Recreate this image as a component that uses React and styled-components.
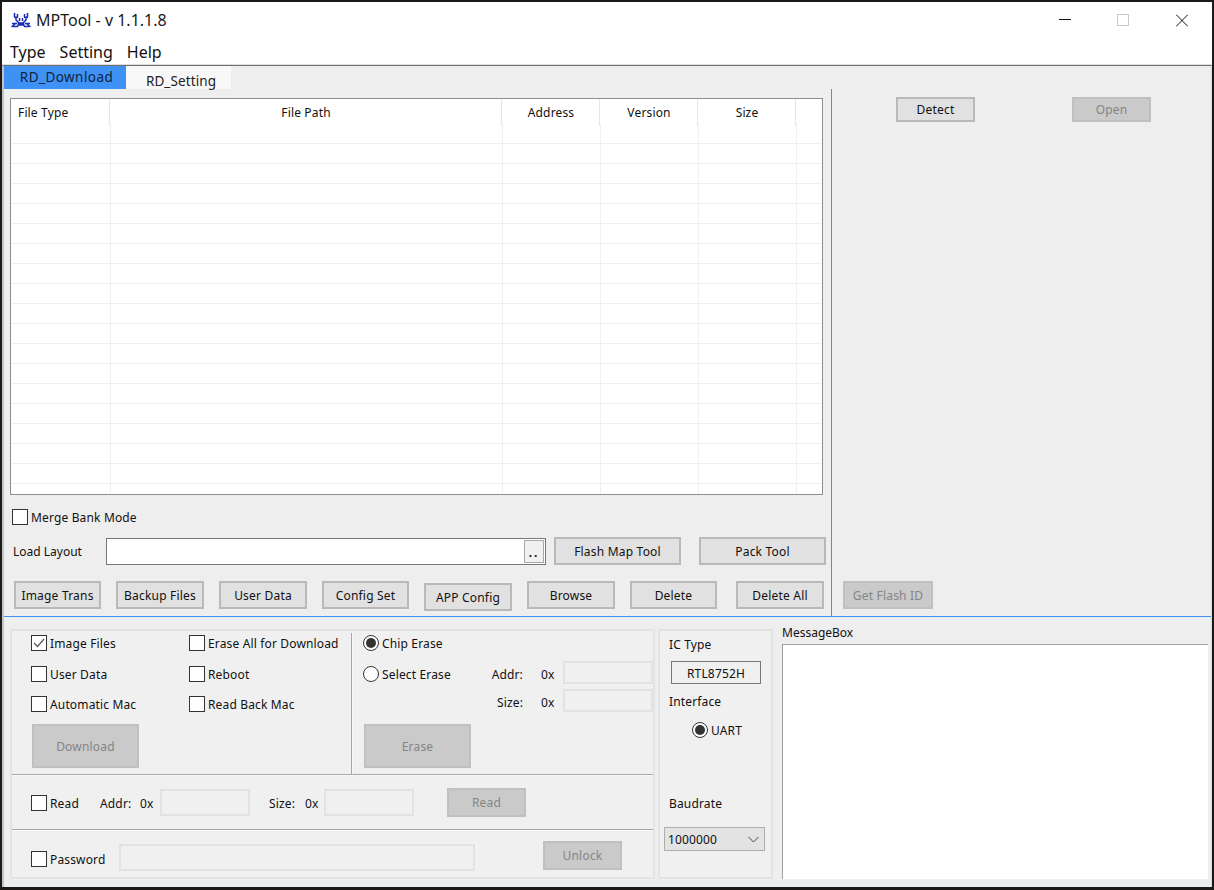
import React from "react";
import styled, { createGlobalStyle } from "styled-components";

const GlobalStyle = createGlobalStyle`
  html, body {
    margin: 0;
    padding: 0;
    background: #1c1a18;
    overflow: hidden;
  }
  * {
    box-sizing: border-box;
  }
`;

const FONT = `"Noto Sans", "Liberation Sans", sans-serif`;

const Window = styled.div`
  width: 1210px;
  height: 885px;
  margin: 2px 0 0 2px;
  background: #eeeeee;
  font-family: ${FONT};
  font-size: 12px;
  line-height: 14px;
  letter-spacing: 0.15px;
  color: #111;
  display: flex;
  flex-direction: column;
  overflow: hidden;
`;

const TitleBar = styled.div`
  height: 35px;
  background: #fff;
  display: flex;
  align-items: center;
  padding: 1px 0 0 9px;
`;

const AppName = styled.span`
  margin-left: 5px;
  font-size: 16px;
  letter-spacing: 0;
  color: #1a1a1a;
  white-space: nowrap;
`;

const WindowControls = styled.div`
  margin-left: auto;
  display: flex;
  align-items: center;
  padding-right: 24px;
  gap: 46px;

  svg {
    display: block;
  }
  svg:last-child {
    margin-left: 1px;
  }
`;

const MenuBar = styled.div`
  height: 28px;
  background: #fff;
  border-bottom: 1px solid #dedede;
  display: flex;
  gap: 14px;
  padding: 3px 0 0 8px;
  font-size: 16px;
  line-height: 24px;
  letter-spacing: 0;
`;

const Body = styled.div`
  flex: 1;
  display: flex;
  flex-direction: column;
  min-height: 0;
  border-top: 1px solid #6e6e6e;
  border-left: 2px solid #c4c4c4;
  border-right: 1px solid #dcdcdc;
`;

const TabStrip = styled.div`
  height: 23px;
  display: flex;
`;

const Tab = styled.div`
  width: ${(p) => p.$w}px;
  background: ${(p) => (p.$active ? "#3f92f5" : "#f8f8f8")};
  color: ${(p) => (p.$active ? "#10243c" : "#222")};
  font-size: 13.5px;
  line-height: 20px;
  text-align: center;
  letter-spacing: ${(p) => (p.$active ? 0.45 : 0.1)}px;
  padding: ${(p) => (p.$active ? "1px 0 0 3px" : "5px 0 0 5px")};
  white-space: nowrap;
`;

const Upper = styled.div`
  height: 528px;
  display: flex;
  border-bottom: 1px solid #3f92f5;
`;

const LeftPanel = styled.div`
  width: 828px;
  padding: 9px 0 0 6px;
  border-right: 1px solid #3f92f5;
`;

const RightPanel = styled.div`
  flex: 1;
  display: flex;
  flex-direction: column;
  justify-content: space-between;
  padding: 8px 0 7px 11px;
`;

const DetectRow = styled.div`
  display: flex;
`;

const TableFrame = styled.div`
  width: 813px;
  height: 397px;
  background: #fff;
  border: 1px solid #8a8f96;
  overflow: hidden;
`;

const HeaderRow = styled.div`
  display: grid;
  grid-template-columns: 99px 392px 98px 98px 98px 1fr;
  height: 25px;
`;

const HeaderCell = styled.div`
  border-right: ${(p) => (p.$last ? "none" : "1px solid #e6e6e6")};
  text-align: ${(p) => (p.$left ? "left" : "center")};
  padding-left: ${(p) => (p.$left ? 7 : 1)}px;
  line-height: 27px;
`;

const TableRow = styled.div`
  display: grid;
  grid-template-columns: 100px 392px 98px 98px 98px 1fr;
  height: 20px;
  border-bottom: 1px solid #f0f0f0;
`;

const TableCell = styled.div`
  border-right: ${(p) => (p.$last ? "none" : "1px solid #f0f0f0")};
`;

const MergeRow = styled.div`
  margin: 14px 0 0 2px;
`;

const LoadRow = styled.div`
  display: flex;
  align-items: center;
  height: 28px;
  margin-top: 12px;
`;

const LoadLabel = styled.span`
  width: 93px;
  margin-left: 3px;
  padding-top: 2px;
  letter-spacing: 0;
`;

const PathInput = styled.div`
  width: 440px;
  height: 27px;
  margin: 1px 8px 0 0;
  background: #fff;
  border: 1px solid #777;
  display: flex;
  justify-content: flex-end;
  align-items: center;
  padding-right: 1px;
`;

const BrowseDots = styled.div`
  width: 20px;
  height: 23px;
  background: #f0f0f0;
  border: 1px solid #a8a8a8;
  text-align: center;
  line-height: 24px;
  font-weight: 700;
  letter-spacing: 2px;
`;

const ActionRow = styled.div`
  display: flex;
  align-items: flex-start;
  gap: 15px;
  height: 30px;
  margin: 16px 0 0 4px;
`;

const Button = styled.div`
  flex: none;
  width: ${(p) => p.$w}px;
  height: ${(p) => p.$h || 28}px;
  margin-top: ${(p) => p.$top || 0}px;
  margin-left: ${(p) => p.$left || 0}px;
  padding-top: ${(p) => p.$pad ?? 2}px;
  background: ${(p) => (p.$disabled ? "#cacaca" : "#e1e1e1")};
  border: 2px solid ${(p) => (p.$disabled ? "#c0c0c0" : "#b9b9b9")};
  color: ${(p) => (p.$disabled ? "#858585" : "#111")};
  letter-spacing: 0.2px;
  display: flex;
  align-items: center;
  justify-content: center;
  white-space: nowrap;
`;

const Lower = styled.div`
  flex: 1;
  display: flex;
  padding: 12px 0 0 6px;
`;

const GroupBox = styled.div`
  flex: none;
  width: ${(p) => p.$w}px;
  height: 250px;
  margin-right: ${(p) => p.$gap}px;
  border: 2px solid #e3e3e3;
  background: #f0f0f0;
  display: flex;
  flex-direction: column;
`;

const OptionsRow = styled.div`
  display: flex;
  height: 143px;
`;

const DownloadColumn = styled.div`
  width: 339px;
  padding: 4px 0 0 19px;
`;

const CheckGrid = styled.div`
  display: grid;
  grid-template-columns: 158px 1fr;
  grid-template-rows: 31px 30px 28px;
`;

const VerticalRule = styled.div`
  width: 2px;
  height: 141px;
  margin-top: 2px;
  background: #a8a8a8;
  border-right: 1px solid #f8f8f8;
`;

const EraseColumn = styled.div`
  flex: 1;
  padding: 4px 0 0 10px;
`;

const Field = styled.label`
  display: flex;
  align-items: center;
  gap: 3px;
  flex: none;
  width: ${(p) => (p.$w ? `${p.$w}px` : "auto")};
  height: 16px;
  margin-top: ${(p) => p.$top || 0}px;
  white-space: nowrap;
`;

const FieldText = styled.span`
  padding-top: 2px;
`;

const CheckSquare = styled.span`
  flex: none;
  width: 16px;
  height: 16px;
  background: #fff;
  border: 1px solid #333;
  display: flex;
  align-items: center;
  justify-content: center;
`;

const RadioCircle = styled.span`
  flex: none;
  width: 16px;
  height: 16px;
  border-radius: 50%;
  background: #fff;
  border: 1px solid #333;
  display: flex;
  align-items: center;
  justify-content: center;

  &::after {
    content: "";
    display: ${(p) => (p.$on ? "block" : "none")};
    width: 10px;
    height: 10px;
    border-radius: 50%;
    background: #333;
  }
`;

const ChipRow = styled.div`
  height: 26px;
`;

const EraseLine = styled.div`
  display: flex;
  align-items: center;
  height: 23px;
  margin-top: ${(p) => p.$top || 0}px;
`;

const FieldLabel = styled.span`
  flex: none;
  width: ${(p) => p.$w}px;
  margin-left: ${(p) => p.$left || 0}px;
  padding-top: ${(p) => p.$pad || 2}px;
  text-align: ${(p) => p.$align || "left"};
  white-space: nowrap;
`;

const HexInput = styled.div`
  flex: none;
  width: ${(p) => p.$w}px;
  height: ${(p) => p.$h || 27}px;
  margin-left: ${(p) => p.$left || 0}px;
  background: #f0f0f0;
  border: 2px solid #e2e2e2;
`;

const HorizontalRule = styled.div`
  height: 2px;
  background: #f8f8f8;
  border-top: 1px solid #a8a8a8;
`;

const ReadRow = styled.div`
  display: flex;
  align-items: center;
  height: 53px;
  padding-left: 19px;
`;

const PasswordRow = styled.div`
  display: flex;
  align-items: center;
  flex: 1;
  padding: 7px 0 0 19px;
`;

const InterfaceBox = styled(GroupBox)`
  padding-left: 4px;
`;

const SideLabel = styled.div`
  margin: ${(p) => p.$top}px 0 0 5px;
`;

const ChipName = styled.div`
  width: 90px;
  height: 23px;
  margin: 9px 0 0 7px;
  padding-top: 2px;
  border: 1px solid #777;
  display: flex;
  align-items: center;
  justify-content: center;
`;

const UartRow = styled.div`
  margin: 13px 0 0 28px;
`;

const BaudSelect = styled.div`
  width: 101px;
  height: 24px;
  margin-top: 16px;
  background: #e3e3e3;
  border: 1px solid #adadad;
  display: flex;
  align-items: center;
  justify-content: space-between;
  padding: 0 5px 0 3px;
`;

const BaudValue = styled.span`
  padding-top: 2px;
`;

const MessagePane = styled.div`
  width: 426px;
  display: flex;
  flex-direction: column;
`;

const MessageLabel = styled.div`
  height: 18px;
  margin-top: -3px;
  letter-spacing: 0;
`;

const MessageArea = styled.div`
  height: 235px;
  background: #fff;
  border-top: 1px solid #a0a0a0;
  border-left: 1px solid #a0a0a0;
`;

const Check = ({ on }) => (
  <CheckSquare>
    {on && (
      <svg width="12" height="10" viewBox="0 0 12 10" fill="none">
        <path d="M1 5l3.5 3.5L11 1" stroke="#555" strokeWidth="1.2" />
      </svg>
    )}
  </CheckSquare>
);

const CheckField = ({ label, on, w, top }) => (
  <Field $w={w} $top={top}>
    <Check on={on} />
    <FieldText>{label}</FieldText>
  </Field>
);

const RadioField = ({ label, on, w, top }) => (
  <Field $w={w} $top={top}>
    <RadioCircle $on={on} />
    <FieldText>{label}</FieldText>
  </Field>
);

const CrabLogo = () => (
  <svg width="20" height="15" viewBox="0 0 20 15" fill="none" stroke="#1b2db8" strokeWidth="1.5">
    <path d="M3.5 0v4M6.5 1v3M3 4.2h4M5 4v3l3 3" />
    <path d="M16.5 0v4M13.5 1v3M13 4.2h4M15 4v3l-3 3" />
    <path d="M8.5 5v3M11.5 5v3" />
    <path d="M7.5 10h5v2h-5z" fill="#1b2db8" />
    <path d="M1 10.5h5M.5 14l4-3.5M2 13.5h4.5l1-2" />
    <path d="M19 10.5h-5M19.5 14l-4-3.5M18 13.5h-4.5l-1-2" />
  </svg>
);

const WindowButtons = () => (
  <WindowControls>
    <svg width="12" height="13" viewBox="0 0 12 13">
      <path d="M0 5.5h12" stroke="#111" strokeWidth="1" />
    </svg>
    <svg width="12" height="13" viewBox="0 0 12 13" fill="none">
      <rect x=".5" y=".5" width="11" height="11" stroke="#c8c8c8" />
    </svg>
    <svg width="12" height="13" viewBox="0 0 12 13">
      <path d="M0 .5l12 12M12 .5l-12 12" stroke="#111" strokeWidth="1" />
    </svg>
  </WindowControls>
);

const headers = ["File Type", "File Path", "Address", "Version", "Size", ""];
const rows = Array.from({ length: 19 }, (_, i) => i);

const FileTable = () => (
  <TableFrame>
    <HeaderRow>
      {headers.map((h, i) => (
        <HeaderCell key={i} $left={i === 0} $last={i === 5}>
          {h}
        </HeaderCell>
      ))}
    </HeaderRow>
    {rows.map((r) => (
      <TableRow key={r}>
        {headers.map((_, i) => (
          <TableCell key={i} $last={i === 5} />
        ))}
      </TableRow>
    ))}
  </TableFrame>
);

export default function App() {
  return (
    <>
      <GlobalStyle />
      <Window>
        <TitleBar>
          <CrabLogo />
          <AppName>MPTool - v 1.1.1.8</AppName>
          <WindowButtons />
        </TitleBar>
        <MenuBar>
          <span>Type</span>
          <span>Setting</span>
          <span>Help</span>
        </MenuBar>
        <Body>
          <TabStrip>
            <Tab $w={122} $active>
              RD_Download
            </Tab>
            <Tab $w={105}>RD_Setting</Tab>
          </TabStrip>
          <Upper>
            <LeftPanel>
              <FileTable />
              <MergeRow>
                <CheckField label="Merge Bank Mode" />
              </MergeRow>
              <LoadRow>
                <LoadLabel>Load Layout</LoadLabel>
                <PathInput>
                  <BrowseDots>..</BrowseDots>
                </PathInput>
                <Button $w={127}>Flash Map Tool</Button>
                <Button $w={127} $left={18}>
                  Pack Tool
                </Button>
              </LoadRow>
              <ActionRow>
                <Button $w={87}>Image Trans</Button>
                <Button $w={88}>Backup Files</Button>
                <Button $w={88}>User Data</Button>
                <Button $w={87}>Config Set</Button>
                <Button $w={88} $top={2}>
                  APP Config
                </Button>
                <Button $w={88}>Browse</Button>
                <Button $w={87}>Delete</Button>
                <Button $w={88} $left={4}>
                  Delete All
                </Button>
              </ActionRow>
            </LeftPanel>
            <RightPanel>
              <DetectRow>
                <Button $w={79} $h={25} $left={53} $pad={0}>
                  Detect
                </Button>
                <Button $w={79} $h={25} $left={97} $pad={0} $disabled>
                  Open
                </Button>
              </DetectRow>
              <Button $w={90} $disabled>
                Get Flash ID
              </Button>
            </RightPanel>
          </Upper>
          <Lower>
            <GroupBox $w={645} $gap={3}>
              <OptionsRow>
                <DownloadColumn>
                  <CheckGrid>
                    <CheckField label="Image Files" on />
                    <CheckField label="Erase All for Download" />
                    <CheckField label="User Data" />
                    <CheckField label="Reboot" />
                    <CheckField label="Automatic Mac" />
                    <CheckField label="Read Back Mac" />
                  </CheckGrid>
                  <Button $w={107} $h={44} $left={1} $disabled>
                    Download
                  </Button>
                </DownloadColumn>
                <VerticalRule />
                <EraseColumn>
                  <ChipRow>
                    <RadioField label="Chip Erase" on />
                  </ChipRow>
                  <EraseLine>
                    <RadioField label="Select Erase" w={128} top={3} />
                    <FieldLabel $w={32} $align="right" $pad={5}>
                      Addr:
                    </FieldLabel>
                    <FieldLabel $w={22} $left={18} $pad={5}>
                      0x
                    </FieldLabel>
                    <HexInput $w={90} $h={23} />
                  </EraseLine>
                  <EraseLine $top={5}>
                    <FieldLabel $w={32} $left={128} $align="right" $pad={4}>
                      Size:
                    </FieldLabel>
                    <FieldLabel $w={22} $left={18} $pad={4}>
                      0x
                    </FieldLabel>
                    <HexInput $w={90} $h={23} />
                  </EraseLine>
                  <Button $w={107} $h={44} $left={1} $top={12} $disabled>
                    Erase
                  </Button>
                </EraseColumn>
              </OptionsRow>
              <HorizontalRule />
              <ReadRow>
                <CheckField label="Read" w={69} />
                <FieldLabel $w={40}>Addr:</FieldLabel>
                <FieldLabel $w={20}>0x</FieldLabel>
                <HexInput $w={90} />
                <FieldLabel $w={36} $left={19}>
                  Size:
                </FieldLabel>
                <FieldLabel $w={19}>0x</FieldLabel>
                <HexInput $w={90} />
                <Button $w={79} $h={29} $left={33} $pad={0} $disabled>
                  Read
                </Button>
              </ReadRow>
              <HorizontalRule />
              <PasswordRow>
                <CheckField label="Password" w={88} top={3} />
                <HexInput $w={356} />
                <Button $w={79} $h={29} $left={68} $top={-4} $pad={0} $disabled>
                  Unlock
                </Button>
              </PasswordRow>
            </GroupBox>
            <InterfaceBox $w={115} $gap={9}>
              <SideLabel $top={7}>IC Type</SideLabel>
              <ChipName>RTL8752H</ChipName>
              <SideLabel $top={11}>Interface</SideLabel>
              <UartRow>
                <RadioField label="UART" on />
              </UartRow>
              <SideLabel $top={59}>Baudrate</SideLabel>
              <BaudSelect>
                <BaudValue>1000000</BaudValue>
                <svg width="11" height="7" viewBox="0 0 11 7" fill="none">
                  <path d="M.5 1l5 5 5-5" stroke="#444" strokeWidth="1" />
                </svg>
              </BaudSelect>
            </InterfaceBox>
            <MessagePane>
              <MessageLabel>MessageBox</MessageLabel>
              <MessageArea />
            </MessagePane>
          </Lower>
        </Body>
      </Window>
    </>
  );
}
